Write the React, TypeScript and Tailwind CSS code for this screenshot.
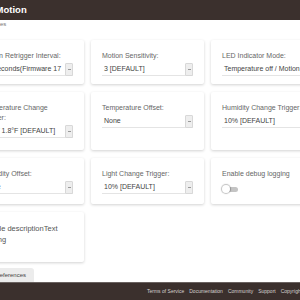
import React from 'react';

interface Pref {
  label: string;
  value?: string;
  toggle?: boolean;
  dark?: boolean;
}

const rows: Pref[][] = [
  [
    { label: 'Motion Retrigger Interval:', value: '30 seconds(Firmware 17' },
    { label: 'Motion Sensitivity:', value: '3 [DEFAULT]' },
    { label: 'LED Indicator Mode:', value: 'Temperature off / Motion on [DEFAULT]' },
  ],
  [
    { label: 'Temperature Change Trigger:', value: '1°C / 1.8°F [DEFAULT]' },
    { label: 'Temperature Offset:', value: 'None' },
    { label: 'Humidity Change Trigger:', value: '10% [DEFAULT]' },
  ],
  [
    { label: 'Humidity Offset:', value: 'None' },
    { label: 'Light Change Trigger:', value: '10% [DEFAULT]' },
    { label: 'Enable debug logging', toggle: true },
  ],
  [{ label: 'Enable descriptionText logging', toggle: true, dark: true }],
];

function Select({ value }: { value: string }) {
  return (
    <div className="mt-[2px] flex items-center h-[13px] border-b border-[#e4e4e4]">
      <span className="flex-1 pl-[2px] whitespace-nowrap overflow-hidden text-[#444]">{value}</span>
      <span className="w-[8px] h-[13px] shrink-0 bg-[#eeeeee] border border-[#d8d8d8] rounded-[1px] flex items-center justify-center">
        <span className="block w-[3px] h-[1px] bg-[#999]"></span>
      </span>
    </div>
  );
}

function Toggle() {
  return (
    <div className="mt-[6px] relative w-[16px] h-[8px] flex items-center">
      <span className="block w-[14px] h-[5px] ml-[2px] rounded-full bg-[#c4c4c4]"></span>
      <span className="absolute left-0 top-0 w-[8px] h-[8px] rounded-full bg-white shadow-[0_0_1px_1px_rgba(0,0,0,0.25)]"></span>
    </div>
  );
}

function Card({ pref }: { pref: Pref }) {
  return (
    <div className="bg-white rounded-[2px] shadow-[0_1px_3px_rgba(0,0,0,0.18)] px-[11px] pt-[11px] overflow-hidden">
      <div className={`leading-[10px] ${pref.dark ? 'text-[#555] text-[7.5px] leading-[11px]' : 'text-[#666]'}`}>
        {pref.label}
      </div>
      {pref.value !== undefined && <Select value={pref.value} />}
      {pref.toggle && !pref.dark && <Toggle />}
    </div>
  );
}

export default function App() {
  return (
    <div className="w-[300px] h-[300px] overflow-hidden bg-white flex flex-col font-['Liberation_Sans',Arial,sans-serif] text-[7px]">
      <header className="h-[20px] shrink-0 bg-[#3b302d] flex items-center">
        <span className="-ml-[34px] text-white font-bold text-[9.5px] whitespace-nowrap">Aqara Motion</span>
      </header>

      <div className="h-[20px] shrink-0">
        <span className="block -ml-[15px] text-[6px] text-[#777] whitespace-nowrap">Devices</span>
      </div>

      <main className="flex-1">
        <div className="-ml-[29px] grid grid-cols-[113px_113px_113px] grid-rows-[44px_58px_46px_50px] gap-x-[7px] gap-y-[8px]">
          {rows.flat().map((pref) => (
            <Card key={pref.label} pref={pref} />
          ))}
        </div>
        <div className="mt-[6px] -ml-[12px] w-[46px] h-[14px] bg-[#ececec] rounded-t-[3px] flex items-center justify-end pr-[8px] text-[6px] text-[#444] whitespace-nowrap">
          Save Preferences
        </div>
      </main>

      <footer className="h-[18px] shrink-0 bg-[#3b302d] border-t border-[#6a6260] flex items-center pl-[147px] gap-[5px] text-[5px] text-[#d6d2d0] whitespace-nowrap">
        <span>Terms of Service</span>
        <span>Documentation</span>
        <span>Community</span>
        <span>Support</span>
        <span>Copyright</span>
      </footer>
    </div>
  );
}
